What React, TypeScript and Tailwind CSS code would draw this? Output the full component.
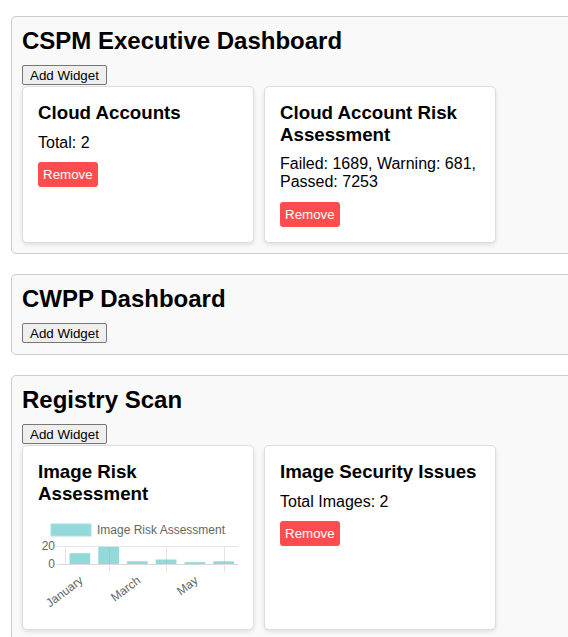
import React from "react";

const FONT = "font-['Liberation_Sans',Arial,sans-serif]";

function AddWidget() {
  return (
    <div className="h-[21px]">
      <button className="block h-[20px] px-[7px] bg-[#efefef] border border-[#767676] rounded-[2px] text-[13.33px] leading-[15px] text-black">
        Add Widget
      </button>
    </div>
  );
}

function RemoveBtn() {
  return (
    <button className="block bg-[#ff4d4f] text-white text-[13.33px] leading-[15.3px] p-[5px] rounded-[3px]">
      Remove
    </button>
  );
}

function Card({ title, children }: { title: string; children: React.ReactNode }) {
  return (
    <div className="w-[232px] shrink-0 bg-white border border-[#ddd] rounded-[5px] p-[15px] shadow-[0_2px_4px_rgba(0,0,0,0.1)]">
      <h3 className="text-[18.72px] leading-[21.5px] font-bold mb-[10px]">{title}</h3>
      {children}
    </div>
  );
}

function Section({ title, children }: { title: string; children?: React.ReactNode }) {
  return (
    <div className="w-[700px] bg-[#f9f9f9] border border-[#ccc] rounded-[5px] p-[10px] mb-[20px]">
      <h2 className="text-[24px] leading-[28px] font-bold mb-[10px]">{title}</h2>
      <AddWidget />
      {children}
    </div>
  );
}

function Chart() {
  const data = [12, 19, 3, 5, 2, 3];
  const x0 = 27.5;
  const cw = (200 - x0) / 6;
  const bw = 20.7;
  const base = 50;
  const labels: [string, number][] = [
    ["January", 0],
    ["March", 2],
    ["May", 4],
  ];
  return (
    <svg width="200" height="100" className="block">
      <rect x="13" y="10" width="40" height="12" fill="#93d9d9" stroke="#a6e0e0" strokeWidth="1" />
      <text x="59" y="20" fontSize="12" fill="#666" fontFamily="Liberation Sans, Arial, sans-serif">
        Image Risk Assessment
      </text>
      <line x1="19" y1="32.5" x2="200" y2="32.5" stroke="#e5e5e5" />
      <line x1="19" y1="50.5" x2="200" y2="50.5" stroke="#d9d9d9" />
      <line x1={x0} y1="32.5" x2={x0} y2="50.5" stroke="#e5e5e5" />
      {[1, 3, 5].map((i) => {
        const cx = Math.round(x0 + cw * (i + 0.5)) + 0.5;
        return <line key={i} x1={cx} y1="32.5" x2={cx} y2="58.5" stroke="#e5e5e5" />;
      })}
      {data.map((v, i) => {
        const cx = x0 + cw * (i + 0.5);
        const h = v * 0.9;
        return <rect key={i} x={cx - bw / 2} y={base - h} width={bw} height={h} fill="rgba(75,192,192,0.6)" />;
      })}
      <text x="17" y="35.5" fontSize="12" fill="#666" textAnchor="end" fontFamily="Liberation Sans, Arial, sans-serif">
        20
      </text>
      <text x="17" y="53.5" fontSize="12" fill="#666" textAnchor="end" fontFamily="Liberation Sans, Arial, sans-serif">
        0
      </text>
      {labels.map(([l, i]) => {
        const tx = x0 + cw * (i + 0.5) + 4;
        const ty = 68;
        return (
          <text
            key={l}
            x={tx}
            y={ty}
            fontSize="12"
            fill="#666"
            textAnchor="end"
            transform={`rotate(-37 ${tx} ${ty})`}
            fontFamily="Liberation Sans, Arial, sans-serif"
          >
            {l}
          </text>
        );
      })}
    </svg>
  );
}

export default function App() {
  return (
    <div className={`${FONT} w-full h-[637px] overflow-hidden bg-white text-black pt-[16px] pl-[11px]`}>
      <Section title="CSPM Executive Dashboard">
        <div className="flex gap-[10px]">
          <Card title="Cloud Accounts">
            <p className="text-[16px] leading-[18.4px] mb-[10px]">Total: 2</p>
            <RemoveBtn />
          </Card>
          <Card title="Cloud Account Risk Assessment">
            <p className="text-[16px] leading-[18.4px] mb-[10px]">Failed: 1689, Warning: 681, Passed: 7253</p>
            <RemoveBtn />
          </Card>
        </div>
      </Section>
      <Section title="CWPP Dashboard" />
      <Section title="Registry Scan">
        <div className="flex gap-[10px]">
          <Card title="Image Risk Assessment">
            <Chart />
          </Card>
          <Card title="Image Security Issues">
            <p className="text-[16px] leading-[18.4px] mb-[10px]">Total Images: 2</p>
            <RemoveBtn />
          </Card>
        </div>
      </Section>
    </div>
  );
}
